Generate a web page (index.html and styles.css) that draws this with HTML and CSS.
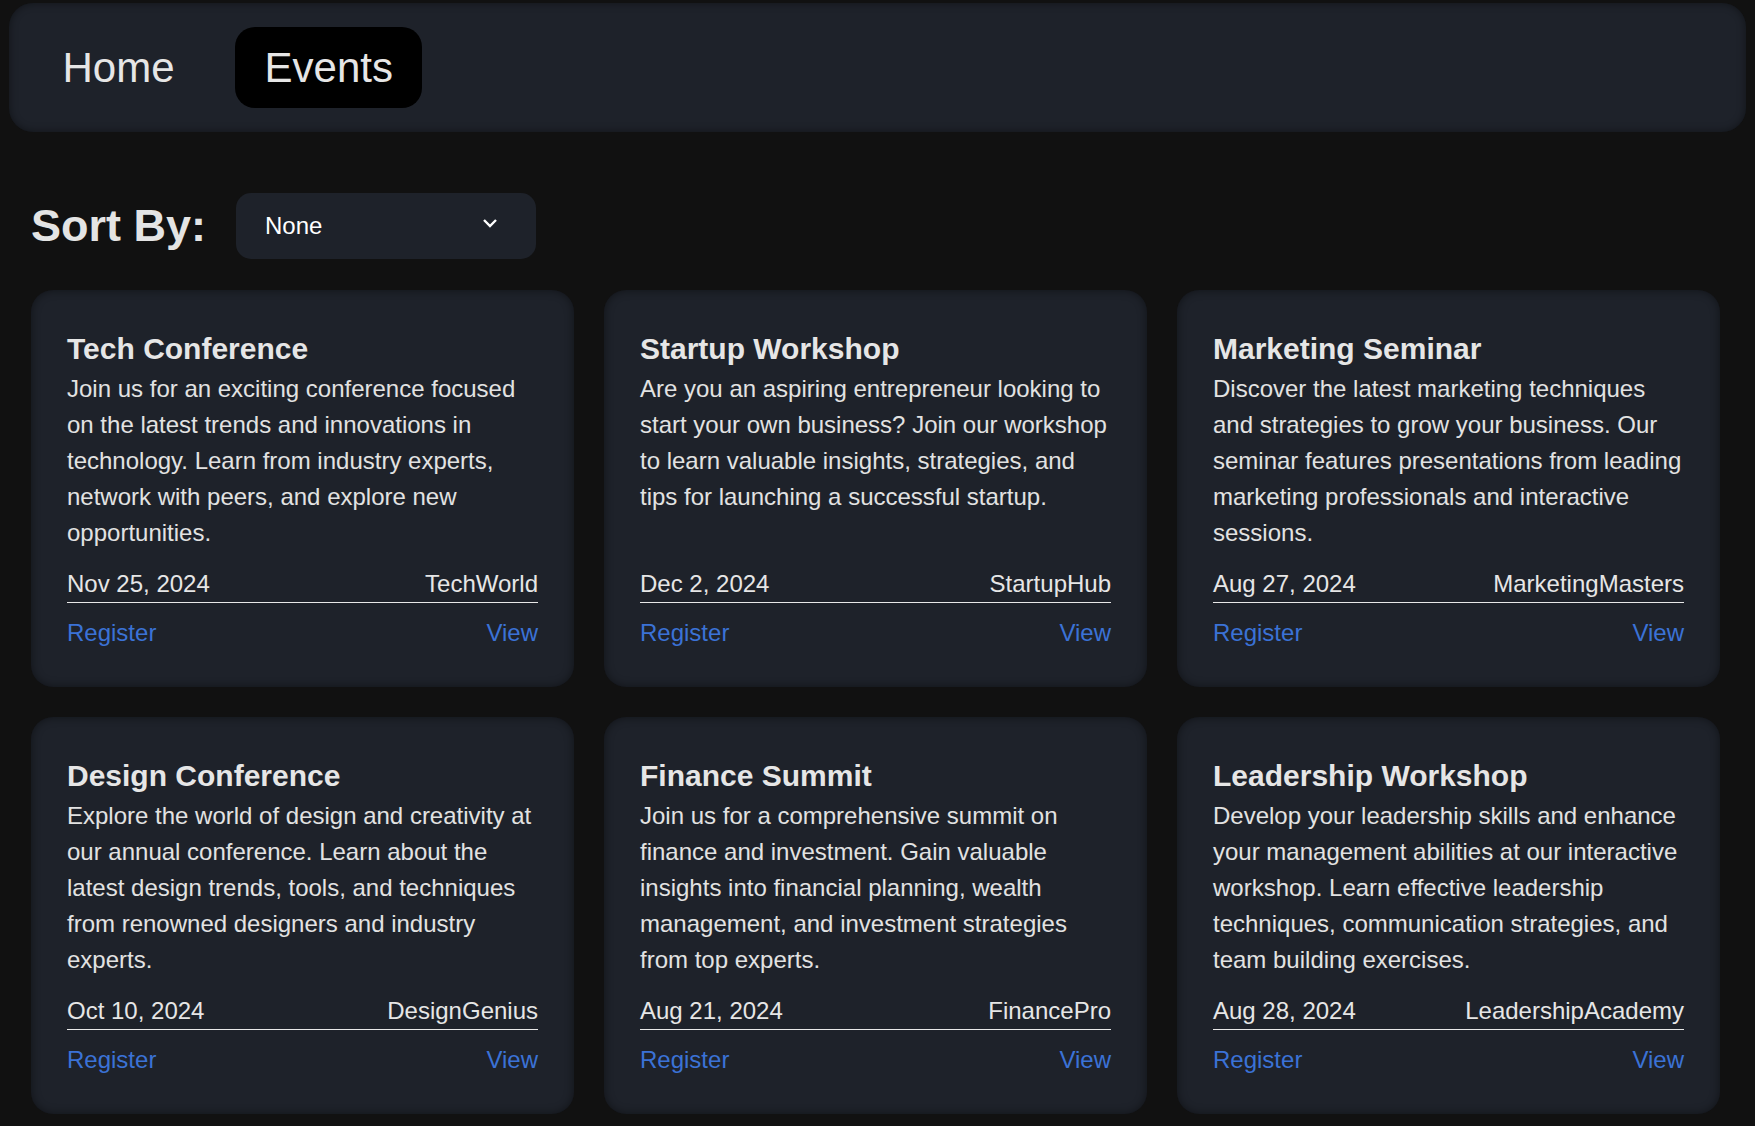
FILE: index.html
```html
<!DOCTYPE html>
<html lang="en">
<head>
<meta charset="utf-8">
<title>Events</title>
<link rel="stylesheet" href="styles.css">
</head>
<body>
<nav class="nav">
  <a class="nav-item" href="#">Home</a>
  <a class="nav-item active" href="#">Events</a>
</nav>
<main class="main">
  <div class="sort-row">
    <h2 class="sort-label">Sort By:</h2>
    <div class="select">
      <span>None</span>
      <svg class="chev" width="16" height="10" viewBox="0 0 16 10"><path d="M2 2 L8 8 L14 2" fill="none" stroke="#fff" stroke-width="2.4"/></svg>
    </div>
  </div>
  <div class="grid">
    <div class="card">
      <h3 class="title">Tech Conference</h3>
      <p class="desc">Join us for an exciting conference focused on the latest trends and innovations in technology. Learn from industry experts, network with peers, and explore new opportunities.</p>
      <div class="meta"><span>Nov 25, 2024</span><span>TechWorld</span></div>
      <div class="links"><a href="#">Register</a><a href="#">View</a></div>
    </div>
    <div class="card">
      <h3 class="title">Startup Workshop</h3>
      <p class="desc">Are you an aspiring entrepreneur looking to start your own business? Join our workshop to learn valuable insights, strategies, and tips for launching a successful startup.</p>
      <div class="meta"><span>Dec 2, 2024</span><span>StartupHub</span></div>
      <div class="links"><a href="#">Register</a><a href="#">View</a></div>
    </div>
    <div class="card">
      <h3 class="title">Marketing Seminar</h3>
      <p class="desc">Discover the latest marketing techniques and strategies to grow your business. Our seminar features presentations from leading marketing professionals and interactive sessions.</p>
      <div class="meta"><span>Aug 27, 2024</span><span>MarketingMasters</span></div>
      <div class="links"><a href="#">Register</a><a href="#">View</a></div>
    </div>
    <div class="card">
      <h3 class="title">Design Conference</h3>
      <p class="desc">Explore the world of design and creativity at our annual conference. Learn about the latest design trends, tools, and techniques from renowned designers and industry experts.</p>
      <div class="meta"><span>Oct 10, 2024</span><span>DesignGenius</span></div>
      <div class="links"><a href="#">Register</a><a href="#">View</a></div>
    </div>
    <div class="card">
      <h3 class="title">Finance Summit</h3>
      <p class="desc">Join us for a comprehensive summit on finance and investment. Gain valuable insights into financial planning, wealth management, and investment strategies from top experts.</p>
      <div class="meta"><span>Aug 21, 2024</span><span>FinancePro</span></div>
      <div class="links"><a href="#">Register</a><a href="#">View</a></div>
    </div>
    <div class="card">
      <h3 class="title">Leadership Workshop</h3>
      <p class="desc">Develop your leadership skills and enhance your management abilities at our interactive workshop. Learn effective leadership techniques, communication strategies, and team building exercises.</p>
      <div class="meta"><span>Aug 28, 2024</span><span>LeadershipAcademy</span></div>
      <div class="links"><a href="#">Register</a><a href="#">View</a></div>
    </div>
  </div>
</main>
</body>
</html>
```

FILE: styles.css
```css
* { box-sizing: border-box; }
html, body { background: #111111; }
body {
  margin: 0;
  font-family: "Liberation Sans", Arial, sans-serif;
  color: #e4e4e4;
}
.nav {
  margin: 3px 9px 0;
  padding: 24px;
  display: flex;
  gap: 31px;
  background: #1e222a;
  border-radius: 24px;
  box-shadow: inset 0 0 8px rgba(0,0,0,0.45);
}
.nav-item {
  display: block;
  font-size: 42px;
  line-height: 47px;
  padding: 17px 29.5px;
  border-radius: 20px;
  color: #e6e6e6;
  text-decoration: none;
}
.nav-item.active { background: #000; }
.main { padding: 0 31px 40px; }
.sort-row {
  display: flex;
  align-items: center;
  gap: 30px;
  margin-top: 61px;
}
.sort-label {
  margin: 0;
  font-size: 45px;
  font-weight: bold;
  color: #e4e4e4;
}
.select {
  width: 300px;
  height: 66px;
  padding: 0 38px 0 29px;
  display: flex;
  align-items: center;
  justify-content: space-between;
  background: #1e222a;
  border-radius: 15px;
  font-size: 24px;
  color: #fff;
}
.chev { display: block; margin-top: -6px; }
.grid {
  margin-top: 31px;
  display: grid;
  grid-template-columns: repeat(3, 543px);
  gap: 30px;
}
.card {
  display: flex;
  flex-direction: column;
  padding: 36px;
  background: #1e222a;
  border-radius: 22px;
  box-shadow: inset 0 0 10px rgba(0,0,0,0.45);
  font-size: 24px;
  line-height: 1.5;
}
.title {
  margin: 0;
  font-size: 30px;
  line-height: 45px;
  font-weight: bold;
  color: #e6e6e6;
}
.desc {
  margin: 0 0 15px;
  flex: 1;
  color: #e2e2e2;
}
.meta {
  display: flex;
  justify-content: space-between;
  border-bottom: 1px solid #e8e8e8;
  color: #e6e6e6;
}
.links {
  margin-top: 12px;
  display: flex;
  justify-content: space-between;
}
.links a {
  color: #3b72d6;
  text-decoration: none;
}
```
